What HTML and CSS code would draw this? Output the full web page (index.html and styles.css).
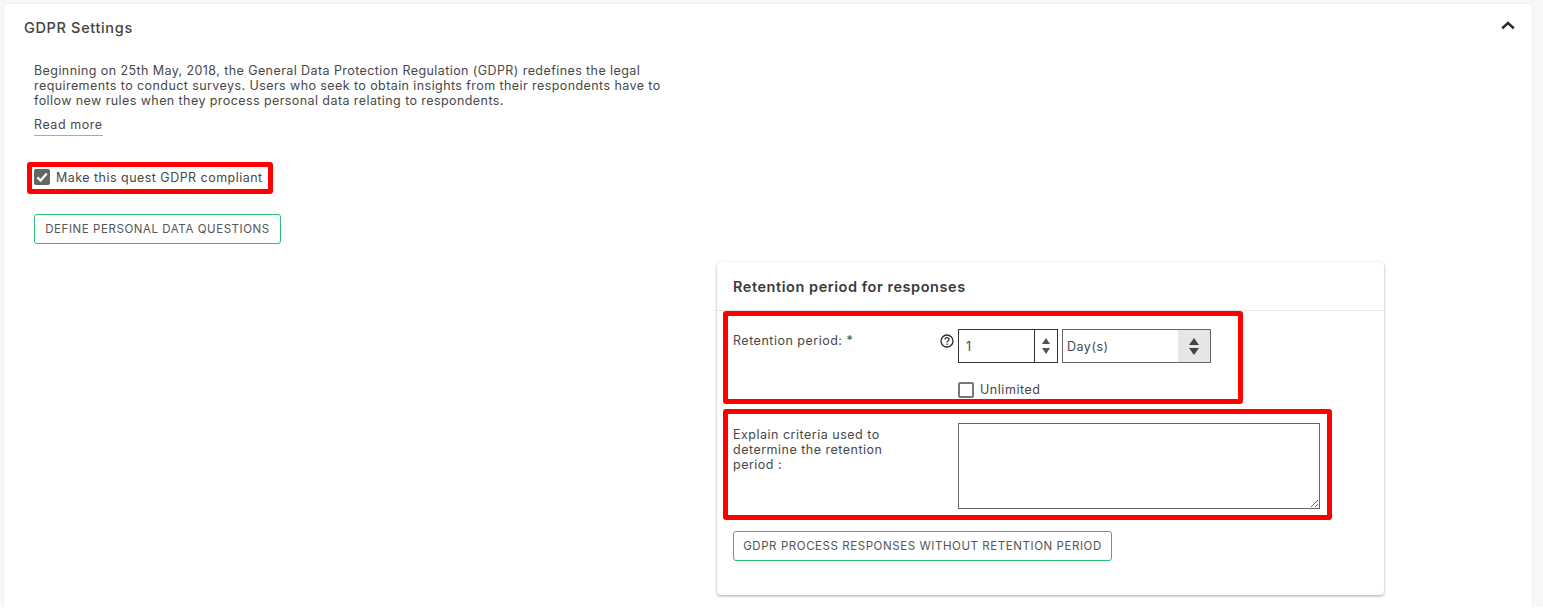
FILE: index.html
```html
<!DOCTYPE html>
<html lang="en">
<head>
<meta charset="utf-8">
<title>GDPR Settings</title>
<link rel="stylesheet" href="styles.css">
</head>
<body>
<div class="page">
<main class="card">
  <header class="card-head">
    <h2 class="card-title">GDPR Settings</h2>
    <svg class="chevron" viewBox="0 0 14 9" aria-hidden="true"><path d="M1.2 7.4 7 2l5.800 5.400" fill="none" stroke="#2b2b2b" stroke-width="2.6"/></svg>
  </header>
  <section class="intro">
    <p class="intro-text">Beginning on 25th May, 2018, the General Data Protection Regulation (GDPR) redefines the legal<br>requirements to conduct surveys. Users who seek to obtain insights from their respondents have to<br>follow new rules when they process personal data relating to respondents.</p>
    <a class="read-more">Read more</a>
    <label class="check-row annotated">
      <span class="check checked"><svg viewBox="0 0 16 16" aria-hidden="true"><path d="M3.4 8.4 6.6 11.6 12.8 4.6" fill="none" stroke="#fff" stroke-width="2.2"/></svg></span>
      <span>Make this quest GDPR compliant</span>
      <span class="mark mark-gdpr"></span>
    </label>
    <button class="outline-btn define-btn">DEFINE PERSONAL DATA QUESTIONS</button>
  </section>
  <section class="panel">
    <h3 class="panel-title">Retention period for responses</h3>
    <div class="panel-body">
      <div class="form-row period-row annotated">
        <span class="mark mark-period"></span>
        <div class="form-label">
          <span>Retention period: *</span>
          <svg class="help" viewBox="0 0 14 14" aria-hidden="true"><circle cx="7" cy="7" r="6" fill="none" stroke="#2b2b2b" stroke-width="1.3"/><path d="M5 5.5c0-1.300 1-1.900 2-1.900s2 .7 2 1.800c0 1.500-2 1.500-2 3" fill="none" stroke="#2b2b2b" stroke-width="1.2"/><circle cx="7" cy="10.300" r=".8" fill="#2b2b2b"/></svg>
        </div>
        <div class="form-field">
          <div class="period-inputs">
            <div class="number-box">
              <span class="number-value">1</span>
              <span class="stepper"><i class="tri up small"></i><i class="tri down small"></i></span>
            </div>
            <div class="select-box">
              <span class="select-value">Day(s)</span>
              <span class="select-arrows"><i class="tri up"></i><i class="tri down"></i></span>
            </div>
          </div>
          <label class="unlimited"><span class="check"></span><span class="unlimited-text">Unlimited</span></label>
        </div>
      </div>
      <div class="form-row criteria-row annotated">
        <span class="mark mark-criteria"></span>
        <div class="form-label criteria-label">Explain criteria used to determine the retention period :</div>
        <textarea class="criteria-input" aria-label="Explain criteria"></textarea>
      </div>
      <button class="outline-btn process-btn">GDPR PROCESS RESPONSES WITHOUT RETENTION PERIOD</button>
    </div>
  </section>
</main>
</div>
</body>
</html>
```

FILE: styles.css
```css
* { box-sizing: border-box; }
html, body { margin: 0; height: 612px; overflow: hidden; background: #fff; }
body {
  font-family: Inter, "Liberation Sans", sans-serif;
  font-size: 12.5px;
  color: #484848;
}
.page {
  height: 607px;
  overflow: hidden;
  background: #f8f8f8;
  padding: 4px 11px 0 4px;
}
.card {
  background: #fff;
  border-radius: 4px 4px 0 0;
  height: 603px;
  box-shadow: 0 0 3px rgba(0,0,0,.08);
}
.card-head {
  display: flex;
  align-items: center;
  justify-content: space-between;
  padding: 7px 17px 0 20px;
  height: 40px;
}
.card-title { margin: 0; font-size: 14.5px; font-weight: 500; letter-spacing: .65px; color: #444; }
.chevron { width: 14px; height: 9px; margin-top: -4px; }
.intro { padding: 19px 0 0 30px; }
.intro-text { margin: 0; line-height: 15px; letter-spacing: .42px; white-space: nowrap; }
.read-more { display: inline-block; margin-top: 10px; height: 18px; line-height: 14px; border-bottom: 1px solid #aaa; letter-spacing: .55px; }
.annotated { position: relative; }
.mark { position: absolute; border: 5px solid #f00; border-radius: 3px; pointer-events: none; }
.check-row { display: flex; align-items: center; gap: 6px; width: 240px; height: 16px; margin-top: 33px; letter-spacing: .47px; }
.check { display: block; flex: none; width: 16px; height: 16px; border: 2px solid #777; border-radius: 2px; background: #fff; }
.check.checked { background: #666; border: 0; }
.check svg { display: block; width: 16px; height: 16px; }
.mark-gdpr { left: -7px; top: -7px; width: 246px; height: 32px; }
.outline-btn {
  display: block;
  height: 30px;
  background: #fff;
  border: 1px solid #2dbd73;
  border-radius: 3px;
  font: inherit;
  font-size: 11.5px;
  letter-spacing: .57px;
  color: #555;
  padding: 0;
}
.define-btn { width: 247px; margin-top: 29px; }
.panel {
  width: 667px;
  margin: 18px 0 0 713px;
  height: 333px;
  background: #fff;
  border-radius: 4px;
  box-shadow: 0 1px 3px rgba(0,0,0,.35);
}
.panel-title {
  margin: 0;
  height: 49px;
  padding: 16px 16px 0;
  font-size: 14.5px;
  font-weight: 600;
  letter-spacing: .55px;
  color: #3a3a3a;
  border-bottom: 1px solid #e6e6e6;
}
.panel-body { padding: 18px 16px 0; }
.form-row { display: flex; }
.form-label { flex: none; width: 225px; display: flex; justify-content: space-between; letter-spacing: .5px; padding-top: 4px; padding-right: 4px; }
.help { width: 14px; height: 14px; margin-top: 1px; }
.form-field { flex: none; }
.period-row { height: 94px; }
.mark-period { left: -10px; top: -18px; width: 520px; height: 93px; }
.period-inputs { display: flex; gap: 4px; }
.number-box { display: flex; width: 100px; height: 34px; border: 1px solid #333; background: #fff; }
.number-value { flex: 1; padding: 9px 0 0 7px; color: #444; }
.stepper { width: 23px; border-left: 1px solid #333; display: flex; flex-direction: column; align-items: center; justify-content: center; gap: 4px; }
.select-box { display: flex; width: 149px; height: 34px; border: 1px solid #666; background: #fff; }
.select-value { flex: 1; padding: 9px 0 0 4px; letter-spacing: .5px; }
.select-arrows { width: 32px; background: #e6e6e6; display: flex; flex-direction: column; align-items: center; justify-content: center; gap: 3px; }
.tri { display: block; width: 0; height: 0; border-left: 5px solid transparent; border-right: 5px solid transparent; }
.tri.up { border-bottom: 7px solid #444; }
.tri.down { border-top: 7px solid #444; }
.tri.small { border-left-width: 4px; border-right-width: 4px; }
.tri.up.small { border-bottom: 6px solid #5a4f4a; }
.tri.down.small { border-top: 6px solid #5a4f4a; }
.unlimited { display: flex; align-items: center; gap: 6px; margin-top: 19px; height: 16px; letter-spacing: .55px; }
.unlimited-text { margin-top: -2px; }
.criteria-row { height: 108px; }
.mark-criteria { left: -10px; top: -14px; width: 609px; height: 111px; }
.criteria-label { display: block; width: 160px; margin-right: 65px; line-height: 15px; padding: 4px 0 0; }
.criteria-input { flex: none; width: 362px; height: 86px; border: 1px solid #666; border-radius: 0; margin: 0; padding: 4px; font: inherit; background: #fff; }
.process-btn { width: 379px; }
```
